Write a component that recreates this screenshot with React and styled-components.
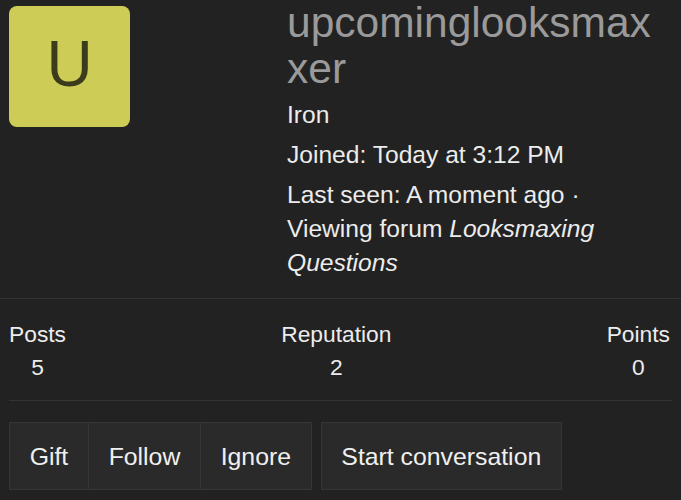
import React from "react"
import styled, { createGlobalStyle } from "styled-components"

const GlobalStyle = createGlobalStyle`
    body {
        margin: 0;
        background: #222222;
        font-family: "Liberation Sans", Helvetica, Arial, sans-serif;
        color: #ececec;
    }
`;

const Page = styled.div`
    width: 681px;
`;

const Header = styled.div`
    display: flex;
    padding: 0 9px 18px;
`;

const AvatarCol = styled.div`
    width: 278px;
    flex-shrink: 0;
`;

const Avatar = styled.div`
    width: 121px;
    height: 121px;
    margin-top: 6px;
    border-radius: 8px;
    background: #cdcc56;
    color: #3c3c1c;
    display: flex;
    align-items: center;
    justify-content: center;
    font-size: 64px;
    padding-bottom: 6px;
    box-sizing: border-box;
`;

const Info = styled.div`
    flex: 1;
    padding-right: 14px;
    min-width: 0;
`;

const Name = styled.div`
    font-size: 42.5px;
    line-height: 46px;
    color: #9a9a9a;
    word-break: break-all;
    margin-bottom: 6px;
`;

const Line = styled.div`
    font-size: 24.6px;
    line-height: 34px;
    margin-bottom: 6px;

    &:last-child {
        margin-bottom: 0;
    }

    em {
        font-style: italic;
    }
`;

const Rule = styled.div`
    height: 1px;
    background: #333333;
    margin: 0 ${p => p.$inset || 0}px;
`;

const Stats = styled.div`
    display: flex;
    justify-content: space-between;
    padding: 19px 11px 16px 9px;
`;

const Stat = styled.div`
    display: flex;
    flex-direction: column;
    align-items: center;
    font-size: 22.8px;
    line-height: 33px;
`;

const Actions = styled.div`
    display: flex;
    gap: 9px;
    padding: 21px 9px;
`;

const Group = styled.div`
    display: flex;
    border: 1px solid #363636;
`;

const Button = styled.div`
    height: 65px;
    display: flex;
    align-items: center;
    padding: 1px 19.7px 0;
    background: #2a2a2a;
    font-size: 24.8px;
    color: #f0f0f0;

    & + & {
        border-left: 1px solid #363636;
    }
`;

const App = () => {
    return (
        <Page>
            <GlobalStyle />
            <Header>
                <AvatarCol>
                    <Avatar>U</Avatar>
                </AvatarCol>
                <Info>
                    <Name>upcominglooksmaxxer</Name>
                    <Line>Iron</Line>
                    <Line>Joined: Today at 3:12 PM</Line>
                    <Line>Last seen: A moment ago · Viewing forum <em>Looksmaxing Questions</em></Line>
                </Info>
            </Header>
            <Rule />
            <Stats>
                <Stat><span>Posts</span><span>5</span></Stat>
                <Stat><span>Reputation</span><span>2</span></Stat>
                <Stat><span>Points</span><span>0</span></Stat>
            </Stats>
            <Rule $inset={9} />
            <Actions>
                <Group>
                    <Button>Gift</Button>
                    <Button>Follow</Button>
                    <Button>Ignore</Button>
                </Group>
                <Group>
                    <Button>Start conversation</Button>
                </Group>
            </Actions>
        </Page>
    )
}

export default App;
